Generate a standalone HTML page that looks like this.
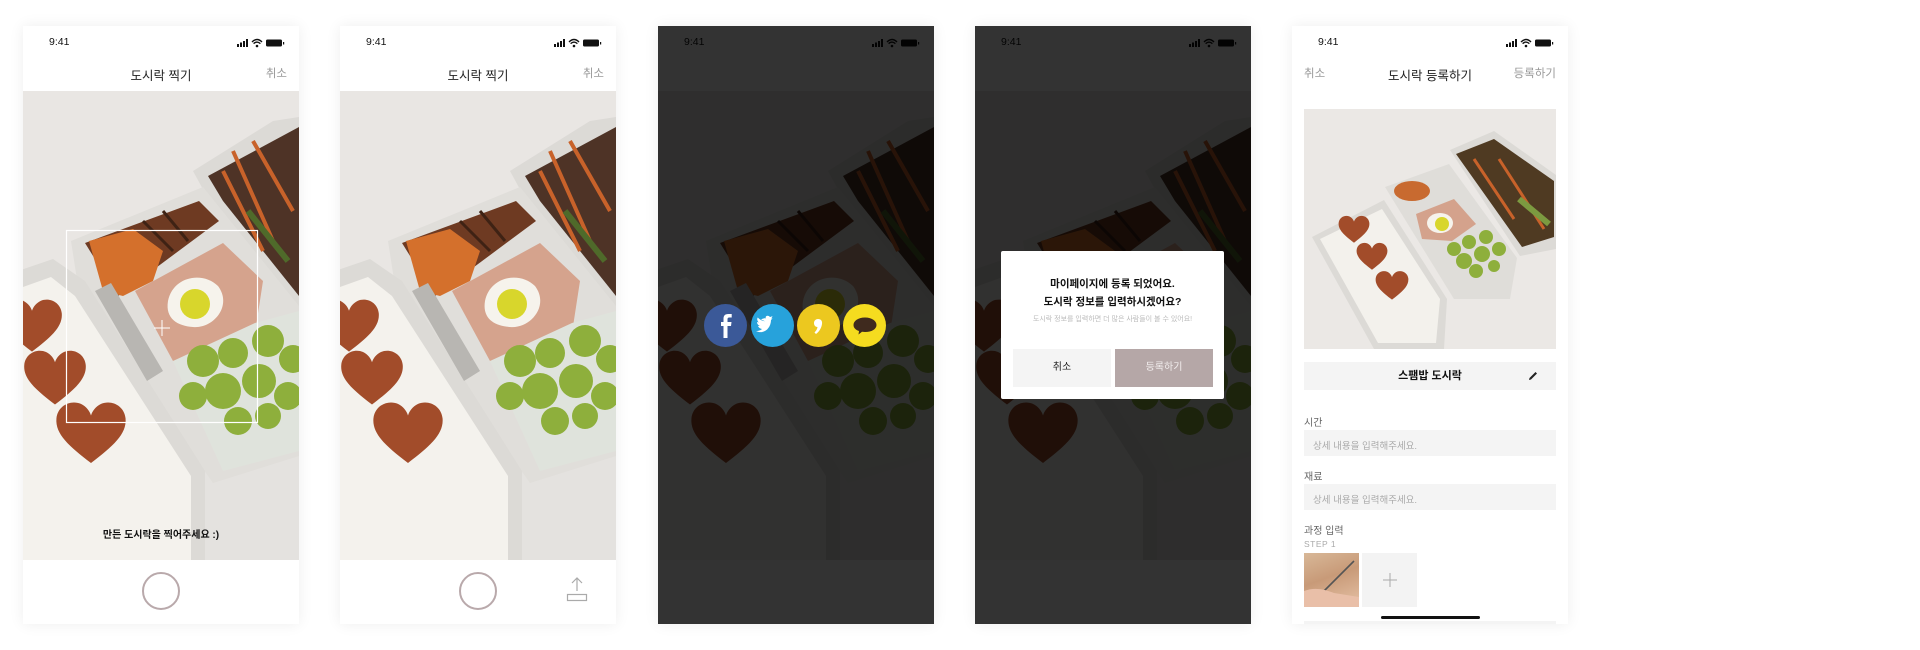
<!DOCTYPE html>
<html><head><meta charset="utf-8">
<style>
*{margin:0;padding:0;box-sizing:border-box}
body{width:1920px;height:650px;background:#fff;position:relative;overflow:hidden;font-family:"Liberation Sans","Noto Sans CJK KR",sans-serif;color:#222}
.ph{position:absolute;top:26px;width:276px;height:598px;background:#fff;overflow:hidden;box-shadow:0 0 14px rgba(0,0,0,.07)}
.time{position:absolute;left:26px;top:10px;font-size:10.5px;color:#111}
.sb{position:absolute;right:12px;top:12px}
.title{position:absolute;left:0;right:0;top:39px;text-align:center;font-size:12.5px;color:#222}
.cancel{position:absolute;right:12px;top:39px;font-size:11.5px;color:#999}
.photo{position:absolute;left:0;top:65px;width:276px;height:469px}
.shutter{position:absolute;left:119px;top:546px;width:38px;height:38px;border-radius:50%;border:2px solid #b9a9ab;background:#fff}
.dim{position:absolute;inset:0;background:rgba(0,0,0,.8)}
.soc{position:absolute;top:278px;width:43px;height:43px;border-radius:50%}
.lbl{position:absolute;left:12px;font-size:10px;color:#666}
.inp{position:absolute;left:12px;width:252px;height:26px;background:#f4f4f4;font-size:9.5px;color:#aaa;padding:8px 0 0 9px}
</style></head><body>
<svg width="0" height="0" style="position:absolute">
<defs>
<symbol id="heart" viewBox="0 0 100 90"><path d="M50 88 C20 65 0 48 2 26 C4 8 22 0 36 6 C44 10 48 16 50 22 C52 16 56 10 64 6 C78 0 96 8 98 26 C100 48 80 65 50 88Z" fill="#a24c2a"/></symbol>
<symbol id="food" viewBox="0 0 276 469">
<rect width="276" height="469" fill="#e9e6e3"/>
<rect y="300" width="276" height="169" fill="#e4e2df"/>
<polygon points="170,80 250,30 276,26 276,225 182,102" fill="#dcdad6"/>
<polygon points="185,85 276,36 276,205 200,110" fill="#4e3326"/>
<path d="M210 60 L250 150 M230 50 L270 120 M200 80 L240 160" stroke="#c8622a" stroke-width="4"/>
<path d="M225 120 L265 170" stroke="#4f6a2a" stroke-width="6"/>
<polygon points="48,150 180,96 276,215 276,365 190,392 150,335 55,195" fill="#e0deda"/>
<polygon points="62,152 176,110 196,130 95,205" fill="#6e3a22"/>
<polygon points="66,150 110,138 140,160 130,190 100,205 80,200" fill="#d4702c"/>
<path d="M120 130 L150 160 M140 120 L165 150" stroke="#3e2214" stroke-width="3"/>
<polygon points="112,200 200,152 240,190 232,242 150,270" fill="#d5a38d"/>
<path d="M145 210 C150 185 180 180 195 195 C210 215 190 238 170 236 C155 235 142 228 145 210Z" fill="#f6f3ec"/>
<circle cx="172" cy="213" r="15" fill="#d8d62c"/>
<polygon points="150,270 232,232 276,220 276,360 200,380" fill="#dfe3dc"/>
<g fill="#8eaf3c">
<circle cx="180" cy="270" r="16"/><circle cx="210" cy="262" r="15"/><circle cx="245" cy="250" r="16"/><circle cx="270" cy="268" r="14"/>
<circle cx="200" cy="300" r="18"/><circle cx="236" cy="290" r="17"/><circle cx="170" cy="305" r="14"/><circle cx="265" cy="305" r="14"/>
<circle cx="215" cy="330" r="14"/><circle cx="245" cy="325" r="13"/>
</g>
<polygon points="-5,180 30,168 62,190 182,380 182,469 -5,469" fill="#dcdad6"/>
<polygon points="0,196 28,186 52,205 168,385 168,469 0,469" fill="#f4f2ed"/>
<use href="#heart" x="-22" y="205" width="62" height="58"/>
<use href="#heart" x="0" y="256" width="64" height="60"/>
<use href="#heart" x="32" y="308" width="72" height="66"/>
<polygon points="72,200 88,192 140,280 124,290" fill="#b8b6b2"/>
</symbol>
<symbol id="food2" viewBox="0 0 252 240">
<rect width="252" height="240" fill="#ebe8e5"/>
<polygon points="146,41 190,22 252,66 252,140 216,147" fill="#dcdad6"/>
<polygon points="152,45 190,30 250,72 250,128 218,138" fill="#4f3a22"/>
<path d="M170 50 L210 110 M195 50 L240 120" stroke="#c8622a" stroke-width="3"/>
<path d="M215 90 L245 115" stroke="#7c9a40" stroke-width="6"/>
<polygon points="81,78 145,55 213,149 206,190 150,190" fill="#dfddd9"/>
<ellipse cx="108" cy="82" rx="18" ry="10" fill="#c86a30"/>
<polygon points="112,105 150,90 172,115 148,132 118,130" fill="#d4a28c"/>
<ellipse cx="136" cy="114" rx="13" ry="10" fill="#f6f3ec"/><circle cx="138" cy="115" r="7" fill="#d8d62c"/>
<g fill="#8eaf3c"><circle cx="150" cy="140" r="7"/><circle cx="165" cy="133" r="7"/><circle cx="182" cy="128" r="7"/><circle cx="160" cy="152" r="8"/><circle cx="178" cy="145" r="8"/><circle cx="195" cy="140" r="7"/><circle cx="172" cy="162" r="7"/><circle cx="190" cy="157" r="6"/></g>
<polygon points="8,128 80,91 143,190 140,240 70,240" fill="#dcdad6"/>
<polygon points="16,130 78,100 136,190 132,234 74,234" fill="#f3f1ec"/>
<use href="#heart" x="34" y="105" width="32" height="30"/>
<use href="#heart" x="52" y="132" width="32" height="30"/>
<use href="#heart" x="71" y="160" width="34" height="32"/>
</symbol>
<symbol id="stat" viewBox="0 0 50 10">
<rect x="0" y="6" width="2" height="3" fill="#111"/><rect x="3" y="4.5" width="2" height="4.5" fill="#111"/><rect x="6" y="3" width="2" height="6" fill="#111"/><rect x="9" y="1" width="2" height="8" fill="#111"/>
<path d="M15 4 Q20 -1 25 4 M16.6 5.6 Q20 2.5 23.4 5.6" stroke="#111" stroke-width="1.4" fill="none"/><circle cx="20" cy="8" r="1.3" fill="#111"/>
<rect x="29" y="1.5" width="16" height="7" rx="1.5" fill="#111"/><rect x="46" y="4" width="1.2" height="2.5" fill="#111"/>
</symbol>
</defs></svg>

<!-- phone 1 -->
<div class="ph" style="left:23px">
<div class="time">9:41</div><svg class="sb" width="50" height="10"><use href="#stat"/></svg>
<div class="title">도시락 찍기</div><div class="cancel">취소</div>
<svg class="photo" viewBox="0 0 276 469"><use href="#food"/>
<rect x="43.5" y="139.5" width="191" height="192" fill="none" stroke="#fff" stroke-width="1.2"/>
<path d="M139 229 V245 M131 237 H147" stroke="#fff" stroke-width="1"/></svg>
<div style="position:absolute;left:0;right:0;top:500px;text-align:center;font-size:10px;font-weight:bold;color:#111">만든 도시락을 찍어주세요 :)</div>
<div class="shutter"></div>
</div>

<!-- phone 2 -->
<div class="ph" style="left:340px">
<div class="time">9:41</div><svg class="sb" width="50" height="10"><use href="#stat"/></svg>
<div class="title">도시락 찍기</div><div class="cancel">취소</div>
<svg class="photo" viewBox="0 0 276 469"><use href="#food"/></svg>
<div class="shutter"></div>
<svg style="position:absolute;left:225px;top:551px" width="24" height="26"><path d="M12 1 V14 M7 6 L12 1 L17 6" stroke="#aaa" stroke-width="1.2" fill="none"/><rect x="2.5" y="17.5" width="19" height="6" fill="none" stroke="#aaa" stroke-width="1.2"/></svg>
</div>

<!-- phone 3 -->
<div class="ph" style="left:658px">
<div class="time">9:41</div><svg class="sb" width="50" height="10"><use href="#stat"/></svg>
<svg class="photo" viewBox="0 0 276 469"><use href="#food"/></svg>
<div class="dim"></div>
<div class="soc" style="left:46px;background:#3b5998"></div>
<div class="soc" style="left:93px;background:#27a2db"></div>
<div class="soc" style="left:139px;background:#ecc81f"></div>
<div class="soc" style="left:185px;background:#f5dc1f"></div>
<svg style="position:absolute;left:46px;top:278px" width="182" height="43">
<path d="M23.5 34 V22 H27 L27.5 18 H23.5 V15.5 C23.5 14 24 13.5 25.5 13.5 H27.7 V10 H24.5 C20.5 10 19.5 12 19.5 15 V18 H17 V22 H19.5 V34Z" fill="#fff"/>
<path d="M57 15.5 C59 14.5 61 14 62 14.5 C60.5 12 64 10.5 66 13 C67.5 12.8 68.5 12 68.5 12 C68 13.5 67.5 14 67 14.5 L68.5 14.2 C68 15 67.5 15.5 67 16 C67 24 60 31 52 27 C55 27 57 26 58 25 C55.5 24.5 54.5 23 54 22 L56 22 C53.5 21 53 19 53 18 L54.8 18.5 C52.8 16.5 53 14.5 53.8 13.5 C56 16 58.5 17 61 17.2Z" fill="#fff"/>
<path d="M114 15 C117 15 118.5 17 118 20 C117.5 24 115 28 112 30 L110.5 28.5 C112 27 113.3 25 113.5 23 C111 23 110 21 110 19 C110 16.5 112 15 114 15Z" fill="#fff"/>
<path d="M161 13.5 C154 13.5 149.5 17 149.5 21 C149.5 24 152 26 155 27 L154.5 30.5 L158 27.8 C159 28 160 28 161 28 C168 28 172.5 25 172.5 21 C172.5 17 168 13.5 161 13.5Z" fill="#3f2a1e"/>
</svg>
</div>

<!-- phone 4 -->
<div class="ph" style="left:975px">
<div class="time">9:41</div><svg class="sb" width="50" height="10"><use href="#stat"/></svg>
<svg class="photo" viewBox="0 0 276 469"><use href="#food"/></svg>
<div class="dim"></div>
<div style="position:absolute;left:26px;top:225px;width:223px;height:148px;background:#fff;border-radius:2px">
<div style="position:absolute;left:0;right:0;top:24px;text-align:center;font-size:10.5px;font-weight:bold;line-height:18px;color:#111">마이페이지에 등록 되었어요.<br>도시락 정보를 입력하시겠어요?</div>
<div style="position:absolute;left:0;right:0;top:63px;text-align:center;font-size:7px;color:#bbb">도시락 정보를 입력하면 더 많은 사람들이 볼 수 있어요!</div>
<div style="position:absolute;left:12px;top:98px;width:98px;height:38px;background:#f4f4f4;text-align:center;line-height:38px;font-size:10px;color:#222">취소</div>
<div style="position:absolute;left:114px;top:98px;width:98px;height:38px;background:#b5a7a7;text-align:center;line-height:38px;font-size:10px;color:#f2eeee">등록하기</div>
</div>
</div>

<!-- phone 5 -->
<div class="ph" style="left:1292px">
<div class="time">9:41</div><svg class="sb" width="50" height="10"><use href="#stat"/></svg>
<div style="position:absolute;left:12px;top:39px;font-size:11.5px;color:#999">취소</div>
<div class="title">도시락 등록하기</div><div class="cancel">등록하기</div>
<svg style="position:absolute;left:12px;top:83px" width="252" height="240" viewBox="0 0 252 240"><use href="#food2"/></svg>
<div style="position:absolute;left:12px;top:336px;width:252px;height:28px;background:#f4f4f4;text-align:center;line-height:28px;font-size:11px;font-weight:bold;color:#111">스팸밥 도시락</div>
<svg style="position:absolute;left:235px;top:344px" width="12" height="12"><path d="M2 10 L2.5 8 L8.5 2 L10 3.5 L4 9.5Z" fill="#222"/></svg>
<div class="lbl" style="top:388px">시간</div>
<div class="inp" style="top:404px">상세 내용을 입력해주세요.</div>
<div class="lbl" style="top:442px">재료</div>
<div class="inp" style="top:458px">상세 내용을 입력해주세요.</div>
<div class="lbl" style="top:496px">과정 입력</div>
<div style="position:absolute;left:12px;top:513px;font-size:8.5px;color:#aaa;letter-spacing:.5px">STEP 1</div>
<div style="position:absolute;left:12px;top:527px;width:55px;height:54px;background:linear-gradient(160deg,#d8b898 0%,#c89a78 45%,#e6c2a6 100%)"></div>
<svg style="position:absolute;left:12px;top:527px" width="55" height="54"><path d="M16 42 L50 8" stroke="#555" stroke-width="1.6"/><path d="M0 38 C10 34 20 36 30 40 L55 44 L55 54 L0 54Z" fill="#e9bfa8"/></svg>
<div style="position:absolute;left:70px;top:527px;width:55px;height:54px;background:#f3f3f3"></div>
<svg style="position:absolute;left:90px;top:546px" width="16" height="16"><path d="M8 1 V15 M1 8 H15" stroke="#aaa" stroke-width="1"/></svg>
<div style="position:absolute;left:12px;top:595px;width:252px;height:10px;background:#f4f4f4"></div>
<div style="position:absolute;left:89px;top:590px;width:99px;height:3px;border-radius:2px;background:#111"></div>
</div>
</body></html>
